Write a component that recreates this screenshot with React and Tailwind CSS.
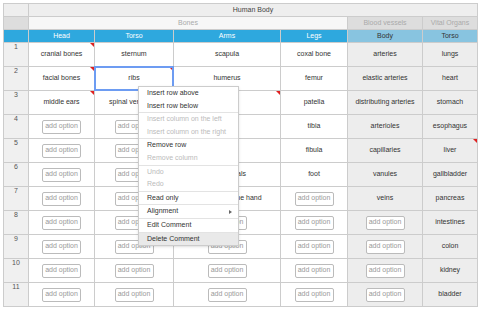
import React from 'react';

const rows = [
  ['cranial bones', 'sternum', 'scapula', 'coxal bone', 'arteries', 'lungs'],
  ['facial bones', 'ribs', 'humerus', 'femur', 'elastic arteries', 'heart'],
  ['middle ears', 'spinal vertebrae', 'radius', 'patella', 'distributing arteries', 'stomach'],
  [null, null, 'ulna', 'tibia', 'arterioles', 'esophagus'],
  [null, null, 'carpals', 'fibula', 'capillaries', 'liver'],
  [null, null, 'metacarpals', 'foot', 'vanules', 'gallbladder'],
  [null, null, 'phalanges of the hand', null, 'veins', 'pancreas'],
  [null, null, null, null, null, 'intestines'],
  [null, null, null, null, null, 'colon'],
  [null, null, null, null, null, 'kidney'],
  [null, null, null, null, null, 'bladder'],
];

// cells carrying a comment marker, as "row-col"
const comments = ['0-0', '1-0', '1-1', '2-0', '2-2', '4-5'];

const menu = [
  { label: 'Insert row above' },
  { label: 'Insert row below' },
  'sep',
  { label: 'Insert column on the left', disabled: true },
  { label: 'Insert column on the right', disabled: true },
  'sep',
  { label: 'Remove row' },
  { label: 'Remove column', disabled: true },
  'sep',
  { label: 'Undo', disabled: true },
  { label: 'Redo', disabled: true },
  'sep',
  { label: 'Read only' },
  'sep',
  { label: 'Alignment', submenu: true },
  'sep',
  { label: 'Edit Comment' },
  'sep',
  { label: 'Delete Comment', active: true },
];

const AddOption = () => (
  <div className="flex h-[14px] w-[39px] items-center justify-center rounded-[2px] border border-[#bbb] bg-white text-[#999]">
    add option
  </div>
);

const Cell = ({ value, gray, comment, selected }) => (
  <div className={`relative flex h-[24px] items-center justify-center border-r border-b border-[#ccc] text-[#333] ${gray ? 'bg-[#ededed]' : 'bg-white'}`}>
    {value === null ? <AddOption /> : <span className="whitespace-nowrap">{value}</span>}
    {comment && (
      <div className="absolute top-0 right-0 h-0 w-0 border-t-[4px] border-l-[4px] border-t-[#e02020] border-l-transparent" />
    )}
    {selected && (
      <div className="absolute -top-px -left-px -right-px -bottom-px border-2 border-[#6d9cf2]" />
    )}
  </div>
);

const ContextMenu = () => (
  <div className="absolute top-[86px] left-[138px] z-10 w-[101px] border border-[#ccc] bg-white shadow-sm">
    {menu.map((item, i) =>
      item === 'sep' ? (
        <div key={i} className="h-px bg-[#e3e3e3]" />
      ) : (
        <div
          key={i}
          className={`flex h-[12.6px] items-center pr-[6px] pl-[8px] whitespace-nowrap ${item.disabled ? 'text-[#bbb]' : 'text-[#333]'} ${item.active ? 'bg-[#e9e9e9]' : ''}`}
        >
          <span>{item.label}</span>
          {item.submenu && (
            <span className="ml-auto h-0 w-0 border-y-[2px] border-l-[3px] border-y-transparent border-l-[#666]" />
          )}
        </div>
      )
    )}
  </div>
);

export default function App() {
  return (
    <div className="relative h-[310px] w-[480px] overflow-hidden bg-white font-['Liberation_Sans',Arial,sans-serif] text-[7px]">
      <div className="mt-[3px] ml-[3px] inline-grid grid-cols-[25px_66px_79px_107px_67px_75px_55px] border-t border-l border-[#ccc]">
        {/* nested header row 1 */}
        <div className="h-[13px] border-r border-b border-[#ccc] bg-[#eee]" />
        <div className="col-span-6 flex h-[13px] items-center justify-center border-r border-b border-[#ccc] bg-[#eee] text-[#444]">
          Human Body
        </div>

        {/* nested header row 2 */}
        <div className="h-[13px] border-r border-b border-[#ccc] bg-[#ddd]" />
        <div className="col-span-4 flex h-[13px] items-center justify-center border-r border-b border-[#ccc] bg-[#f7f7f7] text-[#aaa]">
          Bones
        </div>
        <div className="flex h-[13px] items-center justify-center border-r border-b border-[#ccc] bg-[#ddd] text-[#aaa]">
          Blood vessels
        </div>
        <div className="flex h-[13px] items-center justify-center border-r border-b border-[#ccc] bg-[#ddd] text-[#aaa]">
          Vital Organs
        </div>

        {/* column headers */}
        <div className="h-[13px] border-r border-b border-[#ccc] bg-[#2ea8de]" />
        {['Head', 'Torso', 'Arms', 'Legs'].map(h => (
          <div key={h} className="flex h-[13px] items-center justify-center border-r border-b border-[#ccc] bg-[#2ea8de] text-white">
            {h}
          </div>
        ))}
        {['Body', 'Torso'].map((h, i) => (
          <div key={i} className="flex h-[13px] items-center justify-center border-r border-b border-[#ccc] bg-[#88c4e0] text-[#333]">
            {h}
          </div>
        ))}

        {rows.map((row, r) => (
          <React.Fragment key={r}>
            <div className="flex h-[24px] justify-center border-r border-b border-[#ccc] bg-[#f0f0f0] leading-[8px] text-[#555]">
              {r + 1}
            </div>
            {row.map((value, c) => (
              <Cell
                key={c}
                value={value}
                gray={c >= 4}
                comment={comments.includes(`${r}-${c}`)}
                selected={r === 1 && c === 1}
              />
            ))}
          </React.Fragment>
        ))}
      </div>
      <ContextMenu />
    </div>
  );
}
